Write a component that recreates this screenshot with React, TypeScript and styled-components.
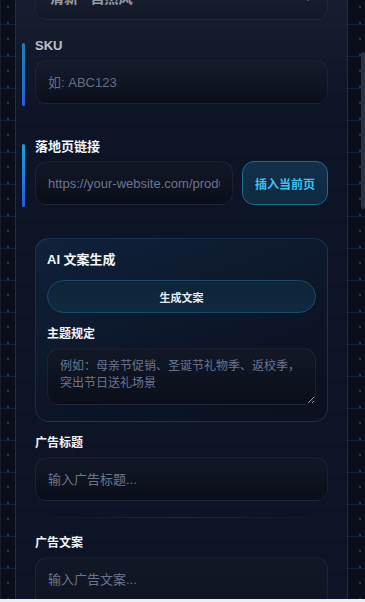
import { useLayoutEffect, useRef } from "react";
import styled, { createGlobalStyle, css } from "styled-components";
import { ChevronDown } from "lucide-react";

const GlobalStyle = createGlobalStyle`
  html, body {
    margin: 0;
    padding: 0;
    background: #eef1ea;
  }
  body {
    font-family: "Liberation Sans", "Noto Sans CJK SC", sans-serif;
  }
  * {
    box-sizing: border-box;
  }
`;

const Frame = styled.div`
  position: relative;
  height: 599px;
  overflow: hidden;

  &::after {
    content: "";
    position: absolute;
    top: 0;
    left: 15px;
    width: 333px;
    height: 110px;
    background: linear-gradient(180deg, rgba(34, 42, 62, 0.45), rgba(34, 42, 62, 0));
    pointer-events: none;
  }
`;

const Viewport = styled.div`
  height: 599px;
  overflow-y: auto;
  overflow-x: hidden;
  scrollbar-width: none;
  background-color: #090e1a;
  background-image:
    linear-gradient(180deg, #11213a 1px, transparent 1px),
    radial-gradient(circle at 8px 8px, #1f3550 1px, transparent 1.6px);
  background-size: 100% 32px, 16px 16px;
  background-position: 0 24px, 0 -1px;
  box-shadow: inset 1px 0 0 #161d2b;

  &::-webkit-scrollbar {
    display: none;
  }
`;

// 自绘滚动条滑块（浏览器原生滚动条被隐藏）
const ScrollThumb = styled.div<{ $top: number; $height: number }>`
  position: absolute;
  right: 0;
  top: ${(p) => p.$top}px;
  width: 4px;
  height: ${(p) => p.$height}px;
  border-radius: 2px;
  background: #2a3140;
  pointer-events: none;
`;

const Panel = styled.div`
  width: 333px;
  min-height: 2300px;
  margin-left: 15px;
  padding: 20px 19px 40px;
  border-left: 1px solid #16324a;
  border-right: 1px solid #16324a;
  background: rgba(15, 22, 40, 0.82);
`;

const PanelTitle = styled.div`
  font-size: 15px;
  line-height: 18px;
  font-weight: 700;
  color: #f1f5f9;
  margin-bottom: 16px;
`;

const Field = styled.div<{ $accent?: boolean; $mt?: number }>`
  position: relative;
  margin-top: ${(p) => p.$mt ?? 0}px;

  ${(p) =>
    p.$accent &&
    css`
      &::before {
        content: "";
        position: absolute;
        left: -13px;
        top: 6px;
        bottom: -2px;
        width: 3px;
        border-radius: 2px;
        background: linear-gradient(180deg, #16a3dc, #2a5be0);
      }
    `}
`;

const Label = styled.label<{ $small?: boolean }>`
  display: block;
  font-size: ${(p) => (p.$small ? 12 : 13)}px;
  line-height: ${(p) => (p.$small ? 16 : 18)}px;
  font-weight: 700;
  color: #f1f5f9;
  margin-bottom: ${(p) => (p.$small ? 6 : 5)}px;
`;

const fieldBox = css`
  width: 100%;
  border-radius: 12px;
  border: 1px solid rgba(148, 163, 184, 0.1);
  background: linear-gradient(180deg, #121827 0%, #0a0e1a 100%);
  color: #e2e8f0;
  font-family: "Liberation Sans", "Noto Sans CJK SC", sans-serif;
  outline: none;

  &::placeholder {
    color: #6b7590;
  }
`;

const TextInput = styled.input`
  ${fieldBox};
  height: 44px;
  padding: 0 12px;
  font-size: 13px;
`;

const TextArea = styled.textarea<{ $h: number; $small?: boolean }>`
  ${fieldBox};
  display: block;
  height: ${(p) => p.$h}px;
  resize: vertical;
  padding: ${(p) => (p.$small ? "9px 12px" : "12px 12px")};
  font-size: ${(p) => (p.$small ? 12 : 13)}px;
  line-height: ${(p) => (p.$small ? 17 : 20)}px;
`;

const SelectWrap = styled.div`
  position: relative;

  svg {
    position: absolute;
    right: 12px;
    top: 14px;
    color: #8d97aa;
    pointer-events: none;
  }
`;

const Select = styled.select`
  ${fieldBox};
  appearance: none;
  height: 44px;
  padding: 0 36px 0 14px;
  font-size: 14px;
  font-weight: 700;
  color: #f1f5f9;
`;

const Row = styled.div`
  display: flex;
  gap: 9px;
`;

const InsertButton = styled.button`
  flex: 0 0 86px;
  height: 44px;
  border-radius: 12px;
  border: 1px solid #1f6b8c;
  background: linear-gradient(180deg, #12304a 0%, #0f2a40 100%);
  color: #3fc1ef;
  font-family: inherit;
  font-size: 12px;
  font-weight: 700;
  cursor: pointer;
`;

const AiCard = styled.div`
  margin-top: 33px;
  padding: 12px 11px 16px;
  border-radius: 14px;
  border: 1px solid rgba(56, 150, 200, 0.22);
  background: linear-gradient(160deg, #10213a 0%, #0c1628 55%, #0a1120 100%);
`;

const CardTitle = styled.div`
  font-size: 13px;
  line-height: 18px;
  font-weight: 700;
  color: #f1f5f9;
  margin-bottom: 11px;
`;

const GenerateButton = styled.button`
  display: block;
  width: 100%;
  height: 33px;
  border-radius: 17px;
  border: 1px solid #1b4a68;
  background: linear-gradient(180deg, #0f2438 0%, #0f2a40 100%);
  color: #e5edf5;
  font-family: inherit;
  font-size: 11px;
  font-weight: 700;
  cursor: pointer;
`;

const SubLabel = styled(Label)`
  margin-top: 13px;
`;

const Divider = styled.div`
  height: 1px;
  margin: 16px -19px 17px;
  background: linear-gradient(90deg, transparent 5%, rgba(148, 163, 184, 0.14) 50%, transparent 95%);
`;

export default function App() {
  const viewRef = useRef<HTMLDivElement>(null);
  const skuRef = useRef<HTMLDivElement>(null);

  useLayoutEffect(() => {
    const view = viewRef.current;
    const sku = skuRef.current;
    if (!view || !sku) return;
    // 把 SKU 区块放到视口里 37px 的位置
    view.scrollTop =
      sku.getBoundingClientRect().top - view.getBoundingClientRect().top + view.scrollTop - 37;
  }, []);

  return (
    <>
      <GlobalStyle />
      <Frame>
        <Viewport ref={viewRef}>
          <Panel>
            <PanelTitle>广告素材</PanelTitle>

            <Field $accent>
              <Label>商品名称</Label>
              <TextInput placeholder="输入商品名称..." />
            </Field>

            <Field $mt={34}>
              <Label>文案风格</Label>
              <SelectWrap>
                <Select defaultValue="fresh">
                  <option value="fresh">清新 · 自然风</option>
                  <option value="pro">专业 · 商务风</option>
                </Select>
                <ChevronDown size={16} strokeWidth={2.5} />
              </SelectWrap>
            </Field>

            <Field $accent $mt={17} ref={skuRef}>
              <Label>SKU</Label>
              <TextInput placeholder="如: ABC123" />
            </Field>

            <Field $accent $mt={34}>
              <Label>落地页链接</Label>
              <Row>
                <TextInput placeholder="https://your-website.com/product" />
                <InsertButton>插入当前页</InsertButton>
              </Row>
            </Field>

            <AiCard>
              <CardTitle>AI 文案生成</CardTitle>
              <GenerateButton>生成文案</GenerateButton>
              <SubLabel $small>主题规定</SubLabel>
              <TextArea
                $small
                $h={57}
                placeholder="例如：母亲节促销、圣诞节礼物季、返校季，突出节日送礼场景"
              />
            </AiCard>

            <Field $mt={13}>
              <Label $small>广告标题</Label>
              <TextInput placeholder="输入广告标题..." />
            </Field>

            <Divider />

            <Field>
              <Label $small>广告文案</Label>
              <TextArea $h={120} placeholder="输入广告文案..." />
            </Field>

            <Field $mt={34}>
              <Label $small>行动号召</Label>
              <TextInput placeholder="如: 立即购买" />
            </Field>

            <Field $mt={34}>
              <Label $small>目标受众</Label>
              <TextInput placeholder="输入目标受众..." />
            </Field>
          </Panel>
        </Viewport>
        <ScrollThumb $top={52} $height={157} />
      </Frame>
    </>
  );
}
